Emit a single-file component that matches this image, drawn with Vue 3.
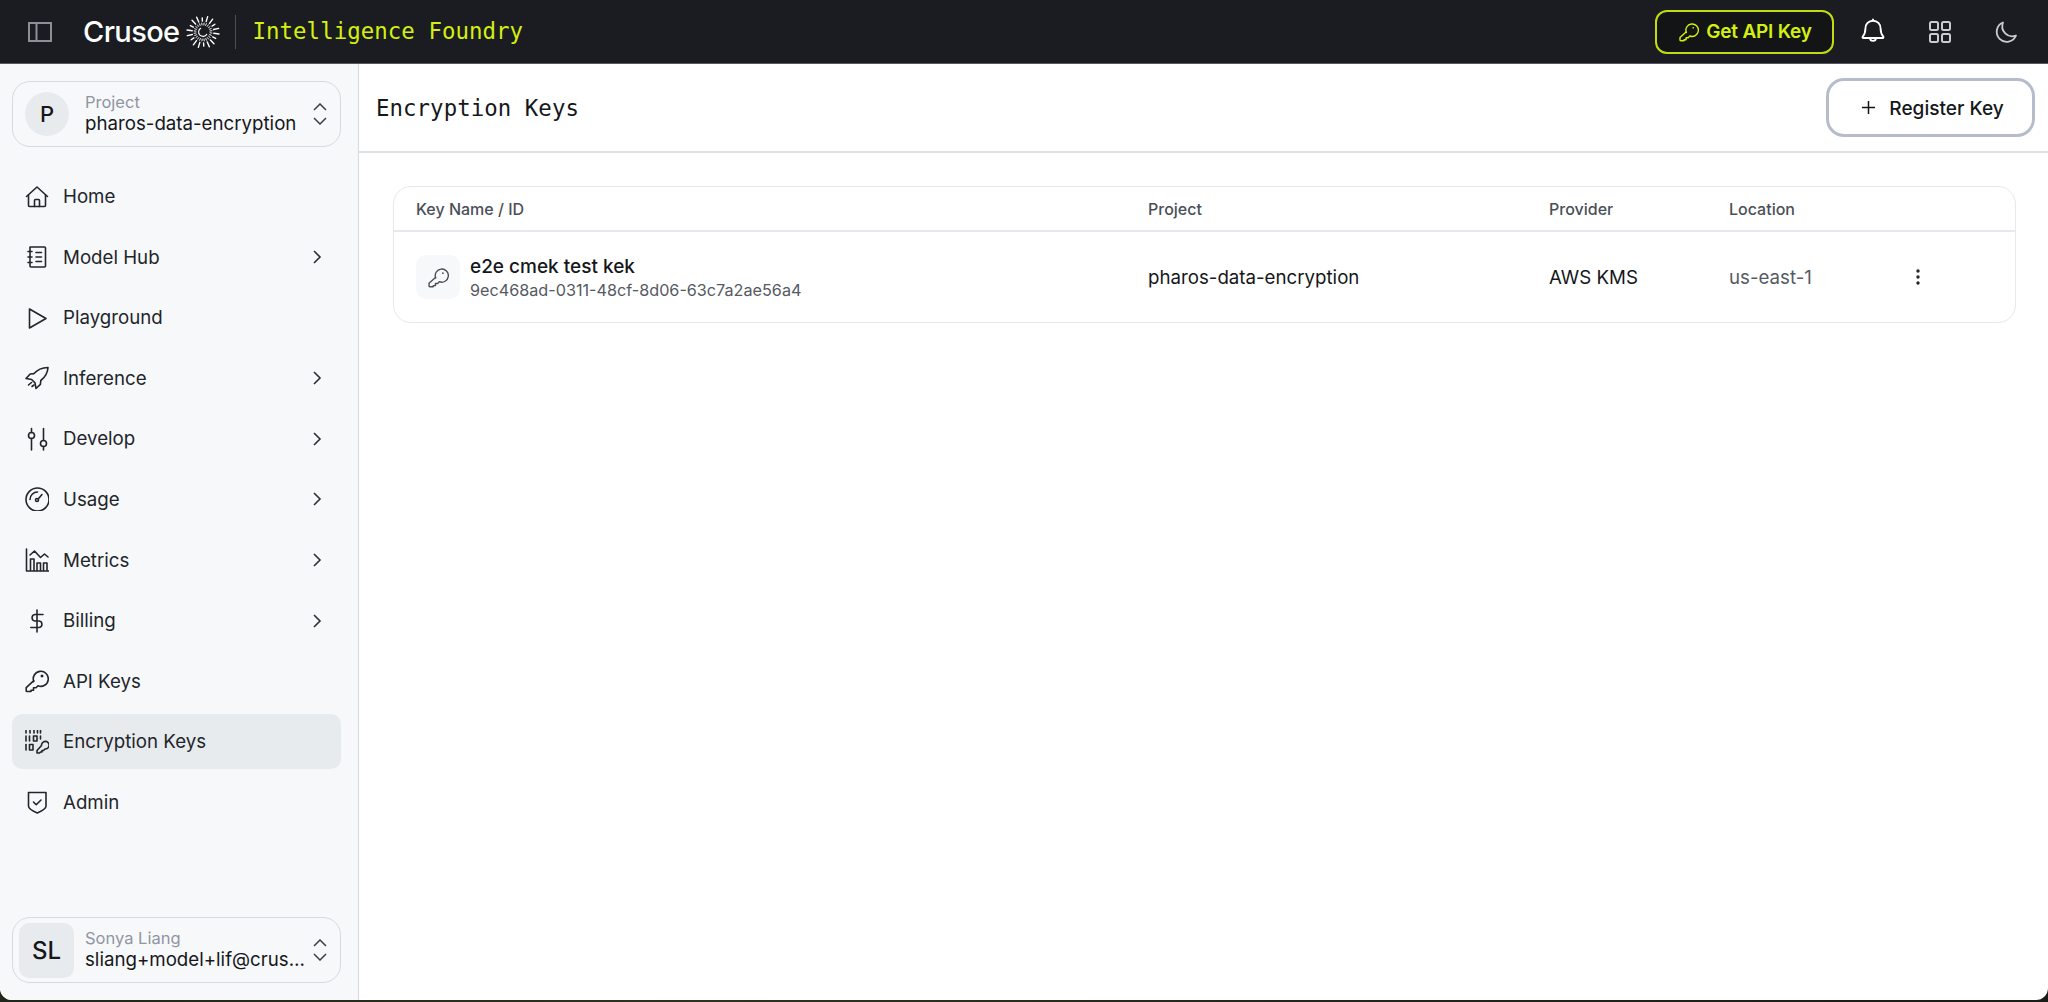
<template>
  <div class="window">
    <header class="topbar">
      <svg class="toggle" width="24" height="20" viewBox="0 0 24 20" fill="none" stroke="#8b9099" stroke-width="2">
        <rect x="1" y="1" width="22" height="18" />
        <path d="M8.5 1v18" />
      </svg>
      <span class="brand">Crusoe</span>
      <svg class="sun" width="34" height="34" viewBox="-18 -18 36 36" fill="none" stroke="#fff" stroke-linecap="round">
        <line
          v-for="(r, i) in rays"
          :key="i"
          :x1="r.x1"
          :y1="r.y1"
          :x2="r.x2"
          :y2="r.y2"
          :stroke-width="r.w"
        />
        <path d="M-2.5 -4 A4.7 4.7 0 1 0 4 2.5" stroke-width="1.2" />
      </svg>
      <span class="divider"></span>
      <span class="product">Intelligence Foundry</span>
      <div class="top-actions">
        <button class="api-btn">
          <svg width="20" height="20" viewBox="0 0 24 24" fill="none" stroke="currentColor" stroke-width="1.7" stroke-linejoin="round" stroke-linecap="round">
            <path :d="keyPath" />
            <circle cx="17" cy="7" r="1" fill="currentColor" stroke="none" />
          </svg>
          Get API Key
        </button>
        <svg class="top-icon bell" width="28" height="28" viewBox="0 0 24 24" fill="none" stroke="#fff" stroke-width="1.6" stroke-linejoin="round">
          <path d="M12 3.2c-3.8 0-6.5 2.9-6.5 6.6 0 3.3-.8 5.3-2.3 7-.4.5-.1 1.2.5 1.2h16.6c.6 0 .9-.7.5-1.2-1.5-1.7-2.3-3.7-2.3-7 0-3.7-2.7-6.6-6.5-6.6z" />
          <path d="M9.5 18a2.5 2.5 0 0 0 5 0M12 3.2V1.5" />
        </svg>
        <svg class="top-icon grid-ic" width="22" height="22" viewBox="0 0 22 22" fill="none" stroke="#c9ccd2" stroke-width="2">
          <rect x="1" y="1" width="8" height="8" rx="1.5" />
          <rect x="13" y="1" width="8" height="8" rx="1.5" />
          <rect x="1" y="13" width="8" height="8" rx="1.5" />
          <rect x="13" y="13" width="8" height="8" rx="1.5" />
        </svg>
        <svg class="top-icon moon" width="24" height="24" viewBox="0 0 24 24" fill="none" stroke="#c9ccd2" stroke-width="1.8" stroke-linejoin="round">
          <path d="M9 2.5A10 10 0 1 0 22 15.5 10 10 0 0 1 9 2.5z" />
        </svg>
      </div>
    </header>

    <div class="body">
      <aside class="sidebar">
        <div class="selector">
          <span class="avatar round">P</span>
          <div class="sel-text">
            <div class="sel-label">Project</div>
            <div class="sel-value">pharos-data-encryption</div>
          </div>
          <svg class="updown" width="16" height="22" viewBox="0 0 16 22" fill="none" stroke="#3a3f47" stroke-width="1.5">
            <path d="M2 7l6-6 6 6M2 15l6 6 6-6" />
          </svg>
        </div>

        <nav class="nav">
          <a v-for="item in nav" :key="item.label" class="nav-item" :class="{ active: item.active }">
            <svg class="nav-icon" width="24" height="24" viewBox="0 0 24 24" fill="none" stroke="#22252a" stroke-width="1.6" stroke-linejoin="round" stroke-linecap="round">
              <path v-for="d in item.paths" :key="d" :d="d" />
            </svg>
            <span class="nav-label">{{ item.label }}</span>
            <svg v-if="item.more" class="chev" width="12" height="16" viewBox="0 0 12 16" fill="none" stroke="#2b2f35" stroke-width="1.6">
              <path d="M3 2l6 6-6 6" />
            </svg>
          </a>
        </nav>

        <div class="selector user">
          <span class="avatar square">SL</span>
          <div class="sel-text">
            <div class="sel-label">Sonya Liang</div>
            <div class="sel-value ellipsis">sliang+model+lif@crusoe.ai</div>
          </div>
          <svg class="updown" width="16" height="22" viewBox="0 0 16 22" fill="none" stroke="#3a3f47" stroke-width="1.5">
            <path d="M2 7l6-6 6 6M2 15l6 6 6-6" />
          </svg>
        </div>
      </aside>

      <main class="main">
        <div class="page-head">
          <h1>Encryption Keys</h1>
          <button class="reg-btn">
            <svg width="15" height="15" viewBox="0 0 16 16" fill="none" stroke="#15171a" stroke-width="1.6">
              <path d="M8 1v14M1 8h14" />
            </svg>
            Register Key
          </button>
        </div>

        <div class="content">
          <div class="table">
            <div class="tr th">
              <div>Key Name / ID</div>
              <div>Project</div>
              <div>Provider</div>
              <div>Location</div>
              <div></div>
            </div>
            <div class="tr td">
              <div class="key-cell">
                <span class="key-box">
                  <svg width="21" height="21" viewBox="0 0 24 24" fill="none" stroke="#4a4f57" stroke-width="1.6" stroke-linejoin="round">
                    <path :d="keyPath" />
                    <circle cx="17" cy="7" r="1" fill="#4a4f57" stroke="none" />
                  </svg>
                </span>
                <div>
                  <div class="key-name">e2e cmek test kek</div>
                  <div class="key-id">9ec468ad-0311-48cf-8d06-63c7a2ae56a4</div>
                </div>
              </div>
              <div>pharos-data-encryption</div>
              <div>AWS KMS</div>
              <div class="muted">us-east-1</div>
              <div>
                <svg class="dots" width="4" height="16" viewBox="0 0 4 16" fill="#22252a">
                  <circle cx="2" cy="2" r="1.7" />
                  <circle cx="2" cy="8" r="1.7" />
                  <circle cx="2" cy="14" r="1.7" />
                </svg>
              </div>
            </div>
          </div>
        </div>
      </main>
    </div>
  </div>
</template>

<script setup>
const keyPath = 'M8.8 12.6A7.5 7.5 0 1 1 13 16.8l-2 2H8.5v2.5H6v1.2H2a.8.8 0 0 1-.8-.8v-3l7.6-7.1z'

// logo rays: two rings of ticks around the middle
const rays = []
const ring = (count, from, to, w, jitter) => {
  for (let i = 0; i < count; i++) {
    const a = (i / count) * Math.PI * 2 + 0.12
    const end = to - (i % 3 === 1 ? jitter : 0)
    rays.push({
      x1: +(Math.cos(a) * from).toFixed(2),
      y1: +(Math.sin(a) * from).toFixed(2),
      x2: +(Math.cos(a) * end).toFixed(2),
      y2: +(Math.sin(a) * end).toFixed(2),
      w
    })
  }
}
ring(18, 11.5, 17, 1.5, 2)
ring(24, 7.5, 9.5, 1, 0)

const nav = [
  {
    label: 'Home',
    paths: ['M1.5 11.5 12 2l10.5 9.5', 'M3.5 10v10.5a1 1 0 0 0 1 1h15a1 1 0 0 0 1-1V10', 'M9.5 21.5v-6a1 1 0 0 1 1-1h3a1 1 0 0 1 1 1v6']
  },
  {
    label: 'Model Hub',
    more: true,
    paths: ['M5 2h14.5a1 1 0 0 1 1 1v18a1 1 0 0 1-1 1H6a1 1 0 0 1-1-1z', 'M3 6.5h4M3 12h4M3 17.5h4', 'M11 7.5h5.5M11 12h5.5M11 16.5h5.5']
  },
  {
    label: 'Playground',
    paths: ['M4.5 3v19l16.5-9.5z']
  },
  {
    label: 'Inference',
    more: true,
    paths: [
      'M23 1.5c-.3 5.5-2.7 9.5-7.2 13l-.4 3.8-4.4 4.2-1-5.6-3.4-3.4-5.6-1L5.2 8 9 7.600C12.5 3.5 17.5 1.700 23 1.500z',
      'M6.500 16.500l-3 2.500M9 19l-2 1.500'
    ]
  },
  {
    label: 'Develop',
    more: true,
    paths: ['M6.500 1.500V5.500M6.500 11.500V23', 'M6.500 5.500a3 3 0 1 1 0 6 3 3 0 0 1 0-6z', 'M18.500 1.500V13.500M18.500 19.500V23', 'M18.500 13.500a3 3 0 1 1 0 6 3 3 0 0 1 0-6z']
  },
  {
    label: 'Usage',
    more: true,
    paths: [
      'M12.500 1a11.500 11.500 0 1 1 0 23 11.500 11.500 0 0 1 0-23z',
      'M12 11.500a1.500 1.500 0 1 1 0 3 1.500 1.500 0 0 1 0-3z',
      'M13.200 12 17 7.500',
      'M5 12.500a7.500 7.500 0 0 1 7.500-7.500'
    ]
  },
  {
    label: 'Metrics',
    more: true,
    paths: [
      'M1.500 1v22h23',
      'M5.500 22.500V11h3.500v11.500M12 22.500V15h3.500v7.500M18.500 22.500V15h3.500v7.500',
      'M5 7 9.500 3l6 6.500 4-3.500 3.500 3'
    ]
  },
  {
    label: 'Billing',
    more: true,
    paths: ['M12 1v22', 'M18 5.500H9.800a3.300 3.300 0 0 0 0 6.500h4.400a3.300 3.300 0 0 1 0 6.500H5.800']
  },
  {
    label: 'API Keys',
    paths: [keyPath, 'M17 6.300a.7.7 0 1 1 0 1.400.7.7 0 0 1 0-1.400z']
  },
  {
    label: 'Encryption Keys',
    active: true,
    paths: [
      'M1 .5V3M5 .5V3M9 .5V3M12.500 .5V3M15.500 .5V3',
      'M1 6v5M4.500 6v5M15.500 6v3',
      'M8.500 6H12v5H8.500z',
      'M1 14.500V20',
      'M4.500 14.500H8V20H4.500z',
      'M16.500 15.500a3.800 3.800 0 1 1 3.500 3.500l-1.500 1.500H17V22h-1.500l-1 1H12v-2.500z'
    ]
  },
  {
    label: 'Admin',
    paths: ['M3.500 2.500H21V16c0 2.500-4 5-8.750 7-4.750-2-8.750-4.500-8.750-7z', 'M8.500 12l2.700 2.700 4.800-4.700']
  }
]
</script>

<style>
html, body {
  margin: 0;
  height: 1002px;
  overflow: hidden;
  background: linear-gradient(90deg, #20261a, #2e3320 35%, #20241a 70%, #1a1d16);
}
</style>

<style scoped>
.window {
  height: 1000px;
  display: flex;
  flex-direction: column;
  overflow: hidden;
  background: #fff;
  border-radius: 0 0 12px 12px;
  font-family: Inter, "Noto Sans", sans-serif;
  color: #15171a;
}

.topbar {
  height: 63px;
  flex: none;
  display: flex;
  align-items: center;
  background: #1a1c21;
  border-bottom: 1px solid #54585f;
  padding-left: 28px;
}
.toggle {
  margin-right: 31px;
}
.brand {
  color: #fff;
  font-size: 29px;
  font-weight: 500;
  letter-spacing: -0.6px;
}
.sun {
  margin-left: 6px;
}
.divider {
  width: 1px;
  height: 34px;
  background: #4a4e55;
  margin-left: 15px;
  margin-right: 17px;
}
.product {
  color: #d4f00f;
  font-family: "DejaVu Sans Mono", monospace;
  font-size: 22.4px;
  letter-spacing: 0.05px;
  position: relative;
  top: -1px;
}
.top-actions {
  margin-left: auto;
  display: flex;
  align-items: center;
}
.api-btn {
  width: 179px;
  height: 44px;
  display: flex;
  align-items: center;
  justify-content: center;
  gap: 7px;
  padding: 0 0 0 2px;
  background: #131416;
  border: 2px solid #c3dc10;
  border-radius: 12px;
  color: #d4f00f;
  font-family: inherit;
  font-size: 19px;
  font-weight: 600;
  letter-spacing: -0.2px;
}
.bell {
  margin-left: 25px;
  position: relative;
  top: -1px;
}
.grid-ic {
  margin-left: 42px;
}
.moon {
  margin-left: 43px;
  margin-right: 30px;
}

.body {
  flex: 1;
  display: flex;
  min-height: 0;
}
.sidebar {
  width: 359px;
  box-sizing: border-box;
  flex: none;
  display: flex;
  flex-direction: column;
  background: #f7f8fa;
  border-right: 1px solid #d5d9e0;
  padding: 17px 17px 17px 12px;
}
.selector {
  height: 66px;
  box-sizing: border-box;
  display: flex;
  align-items: center;
  border: 1.5px solid #d5d9e0;
  border-radius: 18px;
  padding: 0 12px;
  flex: none;
}
.avatar {
  flex: none;
  display: flex;
  align-items: center;
  justify-content: center;
  background: #e8ebee;
  font-weight: 500;
}
.avatar.round {
  width: 44px;
  height: 44px;
  border-radius: 50%;
  font-size: 22px;
}
.avatar.square {
  width: 55px;
  height: 55px;
  border-radius: 10px;
  font-size: 24px;
  margin-left: -6px;
}
.sel-text {
  flex: 1;
  min-width: 0;
  margin-left: 16px;
  margin-right: 2px;
}
.user .sel-text {
  margin-left: 11px;
}
.sel-label {
  font-size: 16.5px;
  line-height: 20px;
  color: #8f96a1;
}
.sel-value {
  font-size: 18.7px;
  line-height: 24px;
  color: #15171a;
}
.ellipsis {
  white-space: nowrap;
  overflow: hidden;
  text-overflow: ellipsis;
}
.updown {
  flex: none;
}

.nav {
  flex: 1;
  display: flex;
  flex-direction: column;
  gap: 5.6px;
  margin-top: 22px;
}
.nav-item {
  height: 55px;
  display: flex;
  align-items: center;
  border-radius: 10px;
  padding: 0 18px 0 13px;
  flex: none;
}
.nav-item.active {
  background: #e8ebee;
}
.nav-label {
  margin-left: 14px;
  font-size: 18.7px;
  color: #22252a;
  flex: 1;
}

.main {
  flex: 1;
  min-width: 0;
  display: flex;
  flex-direction: column;
}
.page-head {
  height: 87px;
  flex: none;
  display: flex;
  align-items: center;
  justify-content: space-between;
  border-bottom: 2px solid #dfe3e8;
  padding: 0 13px 0 17px;
}
h1 {
  margin: 0;
  font-family: "DejaVu Sans Mono", monospace;
  font-size: 22.4px;
  font-weight: 400;
  letter-spacing: 0.05px;
}
.reg-btn {
  width: 209px;
  height: 59px;
  display: flex;
  align-items: center;
  justify-content: center;
  gap: 13px;
  padding: 0 0 0 4px;
  background: #fff;
  border: 3px solid #b5bdcb;
  border-radius: 18px;
  color: #15171a;
  font-family: inherit;
  font-size: 19.1px;
  font-weight: 500;
}

.content {
  padding: 33px 32px 0 34px;
}
.table {
  border: 1px solid #e5e8ec;
  border-radius: 18px;
}
.tr {
  display: grid;
  grid-template-columns: 732px 401px 180px 188px 1fr;
  align-items: center;
  padding-left: 22px;
  font-size: 18.7px;
}
.th {
  height: 43px;
  border-bottom: 2px solid #e5e8ec;
  font-size: 16px;
  font-weight: 500;
  color: #4a4f57;
}
.td {
  height: 90px;
}
.key-cell {
  display: flex;
  align-items: center;
  gap: 10px;
}
.key-box {
  width: 44px;
  height: 44px;
  border-radius: 10px;
  background: #f7f8fa;
  display: flex;
  align-items: center;
  justify-content: center;
}
.key-name {
  font-size: 19px;
  font-weight: 500;
  line-height: 25px;
}
.key-id {
  font-size: 16.2px;
  line-height: 22px;
  color: #555a62;
}
.muted {
  color: #555a62;
}
.dots {
  display: block;
  margin-left: -1px;
}
</style>
